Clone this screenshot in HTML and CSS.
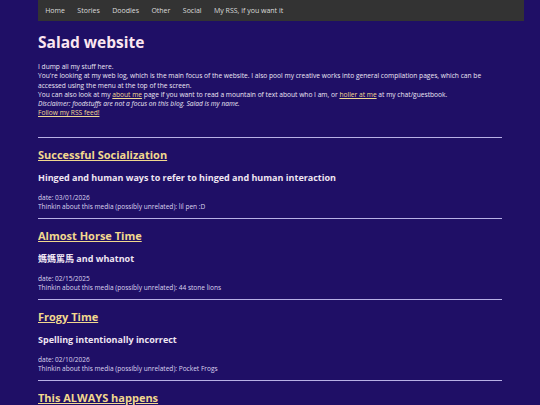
FILE: index.html
```html
<!DOCTYPE html>
<html>
<head>
<meta charset="utf-8">
<link rel="stylesheet" href="styles.css">
</head>
<body>
<div class="page">
  <nav class="topnav">
    <a href="#">Home</a>
    <a href="#">Stories</a>
    <a href="#">Doodles</a>
    <a href="#">Other</a>
    <a href="#">Social</a>
    <a href="#">My RSS, if you want it</a>
  </nav>
  <main class="content">
    <h1 class="site-title">Salad website</h1>
    <div class="intro">
      <p>I dump all my stuff here.</p>
      <p>You're looking at my web log, which is the main focus of the website. I also pool my creative works into general compilation pages, which can be accessed using the menu at the top of the screen.</p>
      <p>You can also look at my <a href="#">about me</a> page if you want to read a mountain of text about who I am, or <a href="#">holler at me</a> at my chat/guestbook.</p>
      <p><em>Disclaimer: foodstuffs are not a focus on this blog. Salad is my name.</em></p>
      <p><a href="#">Follow my RSS feed!</a></p>
    </div>
    <hr class="rule first">
    <article class="post">
      <h2 class="post-title"><a href="#">Successful Socialization</a></h2>
      <h3 class="post-sub">Hinged and human ways to refer to hinged and human interaction</h3>
      <p class="meta">date: 03/01/2026<br>Thinkin about this media (possibly unrelated): lil pen :D</p>
    </article>
    <hr class="rule">
    <article class="post">
      <h2 class="post-title"><a href="#">Almost Horse Time</a></h2>
      <h3 class="post-sub">媽媽罵馬 and whatnot</h3>
      <p class="meta">date: 02/15/2025<br>Thinkin about this media (possibly unrelated): 44 stone lions</p>
    </article>
    <hr class="rule">
    <article class="post">
      <h2 class="post-title"><a href="#">Frogy Time</a></h2>
      <h3 class="post-sub">Spelling intentionally incorrect</h3>
      <p class="meta">date: 02/10/2026<br>Thinkin about this media (possibly unrelated): Pocket Frogs</p>
    </article>
    <hr class="rule">
    <article class="post">
      <h2 class="post-title"><a href="#">This ALWAYS happens</a></h2>
      <h3 class="post-sub">Another post</h3>
      <p class="meta">date: 01/20/2026<br>Thinkin about this media (possibly unrelated): something</p>
    </article>
  </main>
</div>
</body>
</html>
```
FILE: styles.css
```css
html, body {
  margin: 0;
  padding: 0;
  background: #1f0f66;
}
body {
  font-family: "Open Sans", "Noto Sans CJK TC", sans-serif;
  color: #ece6f4;
}
.page {
  padding-left: 38px;
  width: 486px;
}
.topnav {
  display: flex;
  height: 21px;
  align-items: center;
  background: #333333;
  padding-left: 1px;
}
.topnav a {
  color: #dcdcdc;
  text-decoration: none;
  font-size: 7px;
  padding: 0 6.2px;
  line-height: 21px;
}
.content {
  width: 464px;
}
.site-title {
  margin: 9px 0 0;
  font-size: 15.5px;
  font-weight: 700;
  line-height: 24px;
  color: #fbe6f0;
}
.intro {
  margin-top: 8px;
  font-size: 6.65px;
  line-height: 9.3px;
}
.intro p {
  margin: 0;
}
.intro a {
  color: #f0d892;
}
.rule {
  border: 0;
  height: 1px;
  background: #b8b0e6;
  margin: 0;
}
.rule.first {
  margin-top: 19px;
}
.post {
  box-sizing: border-box;
  height: 80px;
  padding-top: 8px;
  overflow: hidden;
}
.post-title {
  margin: 0;
  font-size: 11px;
  font-weight: 700;
  line-height: 18px;
}
.post-title a {
  color: #f2d88e;
}
.post-sub {
  margin: 7px 0 0;
  height: 13px;
  font-size: 9px;
  font-weight: 700;
  line-height: 13px;
  color: #efe6f2;
}
.meta {
  margin: 9px 0 0;
  font-size: 6.55px;
  line-height: 9.5px;
  color: #dcd4ee;
}
```
